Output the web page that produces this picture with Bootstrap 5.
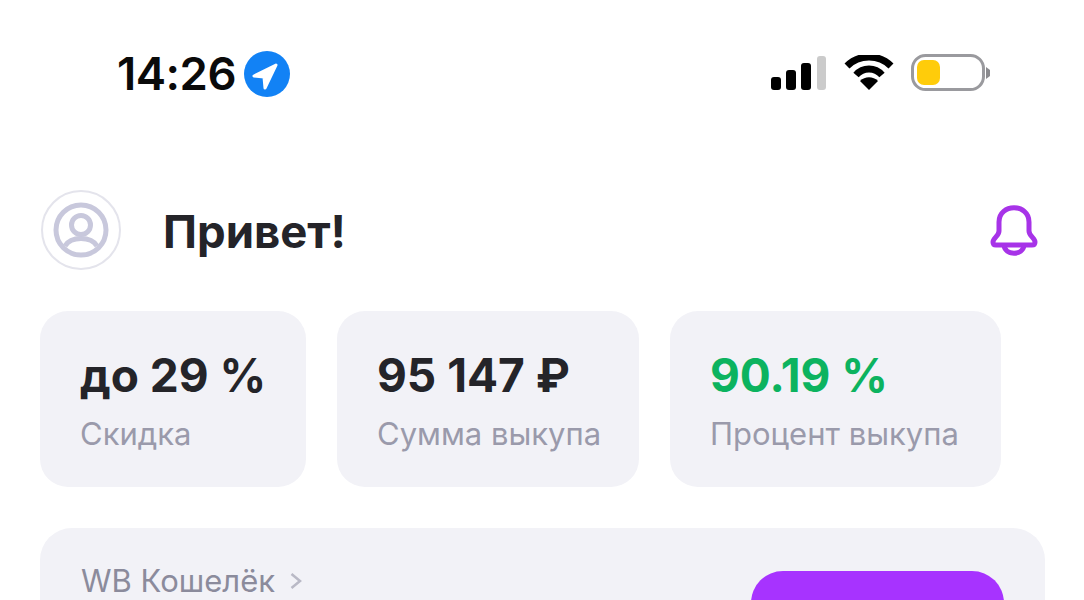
<!DOCTYPE html>
<html lang="ru">
<head>
  <meta charset="UTF-8">
  <meta name="viewport" content="width=device-width, initial-scale=1">
  <title>Привет</title>
  <link href="https://cdn.jsdelivr.net/npm/bootstrap@5.3.0/dist/css/bootstrap.min.css" rel="stylesheet">
  <style>
    html, body { height: 600px; overflow: hidden; }
    body { background: #fff; font-family: Inter, "Noto Sans", sans-serif; color: #242429; }
    .screen { height: 600px; overflow: hidden; padding: 50px 39px 0 40px; }
    .status-row { height: 48px; padding: 0 54px 0 77px; }
    .status-icons { margin-top: -2px; gap: 17px; }
    .clock { font-size: 45.5px; line-height: 48px; font-weight: 600; color: #0a0a0a; letter-spacing: -.5px; }
    .greet-row { margin-top: 92px; height: 80px; }
    .avatar-ring { width: 80px; height: 80px; margin-left: 1px; border: 2px solid #e4e4ec; border-radius: 50%; }
    .greet-text { margin: 4px 0 0 42px; font-size: 45.5px; line-height: 54px; font-weight: 700; }
    .bell-icon { margin-right: 7px; }
    .stat-row { margin-top: 41px; gap: 31px; }
    .stat-box { flex: none; height: 176px; padding: 37px 0 0 40px; background: #f2f2f7; border-radius: 28px; }
    .stat-discount { width: 266px; }
    .stat-sum { width: 302px; }
    .stat-percent { width: 331px; }
    .stat-value { font-size: 46px; line-height: 54px; font-weight: 700; white-space: nowrap; }
    .stat-green { color: #0cb35f; }
    .stat-label { margin-top: 13px; font-size: 31px; line-height: 38px; color: #9a9aab; white-space: nowrap; }
    .wallet-box { margin-top: 41px; height: 200px; padding: 34px 41px 0; background: #f2f2f7; border-radius: 32px; }
    .wallet-link { gap: 15px; font-size: 31px; line-height: 38px; color: #8b8b9c; }
    .wallet-btn { width: 253px; height: 120px; margin-top: 9px; background: #a733ff; border: 0; border-radius: 32px; }
  </style>
</head>
<body>
  <div class="screen">
    <div class="status-row d-flex align-items-center justify-content-between">
      <div class="d-flex align-items-center gap-2">
        <span class="clock">14:26</span>
        <svg width="46" height="46" viewBox="0 0 46 46" aria-hidden="true">
          <circle cx="23" cy="23" r="23" fill="#1282f5"/>
          <path d="M32 14 L10 25 L20 26 L21 37 Z" fill="#fff" stroke="#fff" stroke-width="3" stroke-linejoin="round"/>
        </svg>
      </div>
      <div class="status-icons d-flex align-items-center">
        <svg width="56" height="36" viewBox="0 0 56 36" aria-hidden="true">
          <rect x="0" y="22" width="10" height="13" rx="3" fill="#000"/>
          <rect x="15" y="15" width="10" height="20" rx="3" fill="#000"/>
          <rect x="30" y="8" width="10" height="27" rx="3" fill="#000"/>
          <rect x="46" y="1" width="9" height="34" rx="3" fill="#cbcbcb"/>
        </svg>
        <svg width="50" height="36" viewBox="0 0 50 36" aria-hidden="true">
          <path d="M3 11 C15 -1 35 -1 47 11" fill="none" stroke="#000" stroke-width="7"/>
          <path d="M12 20 C19 12 31 12 38 20" fill="none" stroke="#000" stroke-width="7"/>
          <path d="M25 35 L16 26 C21 21 29 21 34 26 Z" fill="#000"/>
        </svg>
        <svg width="80" height="38" viewBox="0 0 80 38" aria-hidden="true">
          <rect x="1.5" y="1.5" width="71" height="34" rx="13" fill="#fff" stroke="#9a9a9e" stroke-width="3"/>
          <rect x="6" y="6" width="23" height="25" rx="7" fill="#ffcc0a"/>
          <path d="M75 13 L79 16 V22 L75 25 Z" fill="#8a8a8e"/>
        </svg>
      </div>
    </div>

    <div class="greet-row d-flex align-items-center">
      <div class="avatar-ring d-flex align-items-center justify-content-center flex-shrink-0">
        <svg width="56" height="56" viewBox="0 0 56 56" aria-hidden="true" fill="none" stroke="#c8c8dc" stroke-width="5">
          <circle cx="28" cy="28" r="25"/>
          <circle cx="28" cy="23" r="9.5"/>
          <path d="M12 44 C18 34 38 34 44 44"/>
        </svg>
      </div>
      <h1 class="greet-text">Привет!</h1>
      <svg class="bell-icon ms-auto" width="48" height="52" viewBox="0 0 48 52" aria-hidden="true" fill="none" stroke="#a733e8" stroke-width="5" stroke-linejoin="round">
        <path d="M9 27 V18 C9 -1 39 -1 39 18 V27 C39 32 45 34 45 38 C45 40 44 41 42 41 H6 C4 41 3 40 3 38 C3 34 9 32 9 27 Z"/>
        <path d="M14 41 C15 52 33 52 34 41"/>
      </svg>
    </div>

    <div class="stat-row d-flex">
      <div class="stat-box stat-discount">
        <div class="stat-value">до 29 %</div>
        <div class="stat-label">Скидка</div>
      </div>
      <div class="stat-box stat-sum">
        <div class="stat-value">95 147 ₽</div>
        <div class="stat-label">Сумма выкупа</div>
      </div>
      <div class="stat-box stat-percent">
        <div class="stat-value stat-green">90.19 %</div>
        <div class="stat-label">Процент выкупа</div>
      </div>
    </div>

    <div class="wallet-box d-flex justify-content-between">
      <div class="wallet-link d-flex align-items-center align-self-start">
        <span>WB Кошелёк</span>
        <svg width="12" height="20" viewBox="0 0 12 20" aria-hidden="true" fill="none" stroke="#b9b9c6" stroke-width="2.5"><path d="M1.5 3 L10 10 L1.5 17"/></svg>
      </div>
      <button type="button" class="wallet-btn btn" aria-label="Кошелёк"></button>
    </div>
  </div>
  <script src="https://cdn.jsdelivr.net/npm/bootstrap@5.3.0/dist/js/bootstrap.bundle.min.js"></script>
</body>
</html>
